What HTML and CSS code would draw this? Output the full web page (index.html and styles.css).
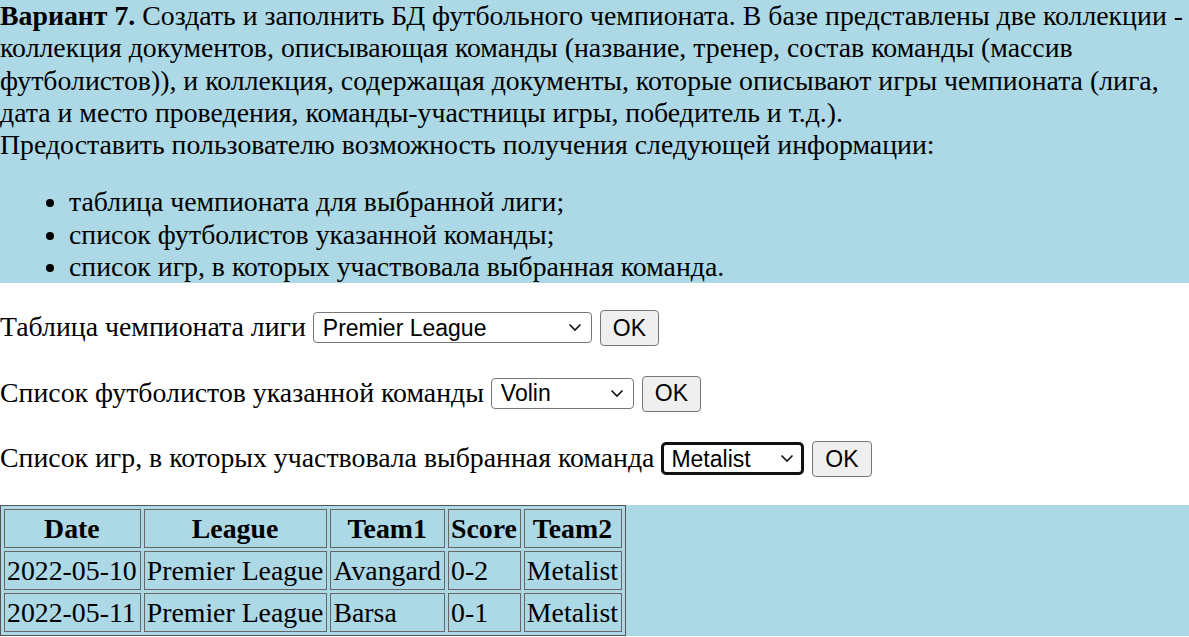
FILE: index.html
```html
<!DOCTYPE html>
<html lang="ru">
<head>
<meta charset="utf-8">
<title>Вариант 7</title>
<link rel="stylesheet" href="styles.css">
</head>
<body>
<div class="task"><b>Вариант 7.</b> Создать и заполнить БД футбольного чемпионата. В базе представлены две коллекции - коллекция документов, описывающая команды (название, тренер, состав команды (массив футболистов)), и коллекция, содержащая документы, которые описывают игры чемпионата (лига, дата и место проведения, команды-участницы игры, победитель и т.д.).<br>Предоставить пользователю возможность получения следующей информации:
<ul class="list">
<li>таблица чемпионата для выбранной лиги;</li>
<li>список футболистов указанной команды;</li>
<li>список игр, в которых участвовала выбранная команда.</li>
</ul>
</div>
<form class="row">Таблица чемпионата лиги <select class="sel sel-league"><option>Premier League</option></select> <button type="button" class="btn">OK</button></form>
<form class="row">Список футболистов указанной команды <select class="sel sel-team"><option>Volin</option></select> <button type="button" class="btn">OK</button></form>
<form class="row">Список игр, в которых участвовала выбранная команда <select class="sel sel-team sel-focus"><option>Metalist</option></select> <button type="button" class="btn">OK</button></form>
<div class="result">
<table class="games">
<tr><th>Date</th><th>League</th><th>Team1</th><th>Score</th><th>Team2</th></tr>
<tr><td>2022-05-10</td><td>Premier League</td><td>Avangard</td><td>0-2</td><td>Metalist</td></tr>
<tr><td>2022-05-11</td><td>Premier League</td><td>Barsa</td><td>0-1</td><td>Metalist</td></tr>
</table>
</div>
</body>
</html>
```
FILE: styles.css
```css
html, body {
  margin: 0;
  padding: 0;
  background: #fff;
}
body {
  font-family: "Liberation Serif", "Times New Roman", serif;
  font-size: 27.8px;
  line-height: 32.3px;
  color: #000;
}
.task {
  background: #add8e6;
}
.list {
  margin: 25px 0 27px;
  padding-left: 69px;
}
.row {
  margin: 27px 0 28px;
}
.row + .row {
  margin-top: 29.5px;
}
.sel {
  -webkit-appearance: none;
  appearance: none;
  font-family: "Liberation Sans", Arial, sans-serif;
  font-size: 23px;
  color: #000;
  height: 31px;
  padding: 0 30px 0 9px;
  border: 1px solid #767676;
  border-radius: 4px;
  background-color: #fff;
  background-image: url("data:image/svg+xml;utf8,<svg xmlns='http://www.w3.org/2000/svg' width='14' height='9' viewBox='0 0 14 9'><path d='M1.5 1.5 L7 7 L12.5 1.5' fill='none' stroke='%23111' stroke-width='1.6'/></svg>");
  background-repeat: no-repeat;
  background-position: right 9px center;
  vertical-align: baseline;
  box-sizing: border-box;
}
.sel-league {
  width: 279px;
}
.sel-team {
  width: 143px;
}
.sel-focus {
  border: 3px solid #111;
  border-radius: 5px;
  padding-left: 7px;
  height: 33px;
  background-position: right 7px center;
}
.btn {
  font-family: "Liberation Sans", Arial, sans-serif;
  font-size: 23px;
  color: #000;
  height: 36px;
  padding: 0 12px;
  background: #efefef;
  border: 1px solid #767676;
  border-radius: 4px;
  margin-left: 1px;
}
.result {
  background: #add8e6;
}
.games {
  border: 1px solid #555;
  border-spacing: 3px;
  background: #add8e6;
}
.games th,
.games td {
  border: 1px solid #666;
  padding: 2.5px 3px 2.5px 2px;
  line-height: 32px;
}
.games th {
  font-weight: bold;
  text-align: center;
}
.games td {
  text-align: left;
}
```
